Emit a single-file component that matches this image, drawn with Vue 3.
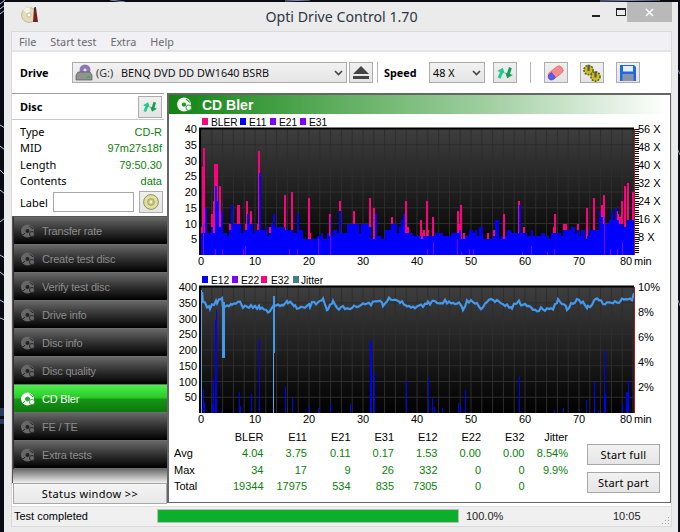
<script setup>
const menus = ['File', 'Start test', 'Extra', 'Help']

const discRows = [
  { k: 'Type', v: 'CD-R' },
  { k: 'MID', v: '97m27s18f' },
  { k: 'Length', v: '79:50.30' },
  { k: 'Contents', v: 'data' },
]

const navItems = ['Transfer rate', 'Create test disc', 'Verify test disc', 'Drive info', 'Disc info', 'Disc quality', 'CD Bler', 'FE / TE', 'Extra tests']

const stats = [
  { label: '', head: true, cells: ['BLER', 'E11', 'E21', 'E31', 'E12', 'E22', 'E32', 'Jitter'] },
  { label: 'Avg', cells: ['4.04', '3.75', '0.11', '0.17', '1.53', '0.00', '0.00', '8.54%'] },
  { label: 'Max', cells: ['34', '17', '9', '26', '332', '0', '0', '9.9%'] },
  { label: 'Total', cells: ['19344', '17975', '534', '835', '7305', '0', '0', ''] },
]

// plot geometry, in page pixels
const X0 = 201
const X1 = 634
const TOP1 = 129
const BASE1 = 255
const TOP2 = 287
const BASE2 = 413
const UNIT1 = 3.15

const minuteTicks = [0, 10, 20, 30, 40, 50, 60, 70, 80]
const vGrid = Array.from({ length: 41 }, (_, i) => X0 + i * 10.8)
const hGrid1 = [5, 10, 15, 20, 25, 30, 35].map(v => BASE1 - v * UNIT1)
const hGrid2 = [50, 100, 150, 200, 250, 300, 350].map(v => BASE2 - v * 0.315)
const leftLabels1 = [40, 35, 30, 25, 20, 15, 10, 5]
const leftLabels2 = [400, 350, 300, 250, 200, 150, 100, 50]
const speedLabels = ['56 X', '48 X', '40 X', '32 X', '24 X', '16 X', '8 X']
const jitterLabels = ['10%', '8%', '6%', '4%', '2%']
const speedTicks = Array.from({ length: 56 }, (_, i) => TOP1 + i * 2.25)

let seed = 1640
function rnd() {
  seed = (seed * 16807) % 2147483647
  return (seed % 1000) / 1000
}

const pinkPeaks = [[203, 28], [204, 34], [212, 13], [214, 17], [215, 29], [216, 29], [217, 29], [220, 22], [238, 16], [239, 16], [247, 17], [251, 14], [259, 33], [285, 19], [292, 20], [309, 18], [330, 13], [340, 17], [354, 14], [370, 18], [374, 15], [406, 17], [421, 11], [427, 17], [433, 12], [458, 14], [461, 16], [504, 13], [519, 17], [555, 13], [587, 15], [594, 18], [602, 16], [604, 19], [617, 14], [622, 17], [625, 22], [628, 23], [633, 20]]
const bluePeaks = { 205: 15, 215: 22, 217: 17, 221: 14, 231: 16, 247: 13, 259: 26, 273: 13, 297: 13, 340: 14, 376: 13, 404: 13, 519: 16, 600: 14, 611: 14, 615: 15 }
const purpleBars = [[203, 10], [215, 2], [222, 2], [243, 2], [245, 3], [289, 2], [297, 2], [318, 5], [330, 12], [427, 2], [433, 4], [457, 5], [461, 1], [469, 2], [473, 2], [522, 1], [531, 3], [547, 1], [554, 2], [604, 12], [610, 2], [617, 2], [622, 4]]

const bars1 = []
for (const [x, v] of pinkPeaks) {
  bars1.push({ x: x - 1, y: BASE1 - v * UNIT1, w: 2, h: v * UNIT1, c: '#ff0080' })
}
let held = 7
for (let x = X0; x < X1; x += 2) {
  // the error count holds for a few samples, then steps to a new level
  if (rnd() < 0.55) {
    if (x < 300) held = 6 + Math.round(rnd() * 4)
    else if (x < 590) held = 5 + Math.round(rnd() * 3) + (rnd() < 0.2 ? 3 : 0)
    else held = 9 + Math.round(rnd() * 5)
  }
  let v = held
  if (bluePeaks[x] || bluePeaks[x + 1]) v = bluePeaks[x] || bluePeaks[x + 1]
  if (rnd() < 0.14) bars1.push({ x, y: BASE1 - (v + 2) * UNIT1, w: 2, h: 2 * UNIT1, c: '#ff0080' })
  bars1.push({ x, y: BASE1 - v * UNIT1, w: 2, h: v * UNIT1, c: '#0000ff' })
}
for (const [x, v] of purpleBars) {
  bars1.push({ x, y: BASE1 - v * UNIT1, w: 1, h: v * UNIT1, c: '#8000ff' })
}

const e12Bars = [[203, 24], [204, 11], [212, 9], [213, 33], [215, 93], [216, 103], [221, 2], [239, 21], [240, 7], [251, 19], [259, 74], [285, 26], [292, 15], [309, 8], [318, 5], [330, 9], [338, 1], [350, 9], [370, 72], [371, 72], [374, 41], [406, 32], [420, 1], [428, 35], [432, 15], [434, 6], [442, 5], [458, 10], [460, 7], [465, 23], [519, 37], [554, 3], [563, 5], [586, 13], [594, 31], [598, 3], [604, 62], [605, 19], [622, 10], [626, 21], [627, 21], [628, 33]]

const jitterKeys = [[202, 290], [203, 302], [210, 308], [217, 302], [222, 300], [223, 308], [232, 305], [238, 300], [243, 307], [260, 307], [268, 312], [274, 303], [283, 307], [288, 302], [295, 307], [310, 305], [323, 300], [328, 310], [333, 300], [337, 307], [348, 309], [357, 306], [373, 303], [378, 300], [383, 305], [389, 297], [400, 302], [407, 307], [415, 308], [428, 303], [433, 302], [445, 302], [460, 302], [463, 311], [467, 300], [483, 308], [487, 300], [503, 303], [512, 308], [517, 302], [537, 310], [553, 308], [558, 300], [567, 308], [577, 300], [588, 307], [595, 300], [607, 303], [620, 301], [632, 300], [634, 293]]
const jitterPts = []
for (let i = 0; i < jitterKeys.length - 1; i++) {
  const [ax, ay] = jitterKeys[i]
  const [bx, by] = jitterKeys[i + 1]
  for (let x = ax; x < bx; x += 2) {
    const y = ay + ((by - ay) * (x - ax)) / (bx - ax) + (rnd() - 0.5) * 4.5
    jitterPts.push(`${x},${y.toFixed(1)}`)
  }
}
jitterPts.push('634,293')
const jitterLine = jitterPts.join(' ')
</script>

<template>
  <div class="desktop">
    <svg class="wallpaper" width="680" height="532" viewBox="0 0 680 532">
      <path d="M0 4 L5 0 M0 9 L5 5 M0 14 L5 10 M0 125 L5 128 M0 146 L5 150 M0 170 L5 175 M0 190 L5 194 M0 222 L5 218 M0 255 L5 258 M0 272 L5 276 M0 300 L5 303 M0 318 L5 320" stroke="#b9c8ee" stroke-width="1" />
      <rect x="0" y="408" width="4" height="8" fill="#2b3a5c" />
      <rect x="0" y="419" width="4" height="5" fill="#2b3a5c" />
      <path d="M110 0 L125 2 M285 1 L310 0 M600 1 L660 0 M678 70 L680 74 M678 150 L680 155 M678 300 L680 306" stroke="#7f8fb5" stroke-width="1" />
    </svg>

    <div class="window">
      <div class="titlebar">
        <svg class="app-icon" width="18" height="18" viewBox="0 0 18 18">
          <circle cx="8" cy="9" r="7.5" fill="#e4dcb8" stroke="#a8a080" stroke-width=".6" />
          <path d="M8 9 L2 4 A7.5 7.5 0 0 1 9 1.5 Z" fill="#f6f3e2" />
          <circle cx="8" cy="9" r="2" fill="#fff" stroke="#999" stroke-width=".6" />
          <path d="M13 2 L15 2 L17 16 L12 16 Z" fill="#7a2020" />
          <rect x="13.4" y="1" width="1.5" height="4" fill="#333" />
        </svg>
        <span class="win-title">Opti Drive Control 1.70</span>
        <div class="controls">
          <span class="min-btn"></span>
          <span class="max-btn"></span>
          <span class="close-btn">
            <svg width="9" height="9" viewBox="0 0 9 9"><path d="M1 1 L8 8 M8 1 L1 8" stroke="#fff" stroke-width="1.5" /></svg>
          </span>
        </div>
      </div>

      <div class="client">
        <div class="menubar">
          <span v-for="m in menus" :key="m">{{ m }}</span>
        </div>

        <div class="toolbar">
          <b class="tool-label drive-label">Drive</b>
          <div class="select drive-select">
            <svg width="18" height="17" viewBox="0 0 18 17">
              <circle cx="10" cy="6" r="5.5" fill="#8c78b8" />
              <circle cx="10" cy="6" r="1.6" fill="#e4e0f0" />
              <path d="M1 11 L3 8 H15 L17 11 V16 H1 Z" fill="#8f9490" stroke="#555" stroke-width=".7" />
              <rect x="12" y="12.5" width="3" height="1.5" fill="#22bb44" />
            </svg>
            <span class="drive-letter">(G:)</span>
            <span class="drive-name">BENQ DVD DD DW1640 BSRB</span>
            <svg class="chev" width="9" height="6" viewBox="0 0 9 6"><path d="M1 1 L4.5 4.5 L8 1" fill="none" stroke="#444" stroke-width="1.6" /></svg>
          </div>
          <button class="tbtn eject">
            <svg width="16" height="14" viewBox="0 0 16 14"><path d="M8 0 L16 8 H0 Z" fill="#444" /><rect x="0" y="10" width="16" height="3" fill="#444" /></svg>
          </button>
          <i class="tsep sep-a"></i>
          <b class="tool-label speed-label">Speed</b>
          <div class="select speed-select">
            <span>48 X</span>
            <svg class="chev" width="9" height="6" viewBox="0 0 9 6"><path d="M1 1 L4.5 4.5 L8 1" fill="none" stroke="#444" stroke-width="1.6" /></svg>
          </div>
          <button class="tbtn refresh">
            <svg width="18" height="18" viewBox="0 0 18 18">
              <g transform="rotate(22 9 9)">
                <path d="M1 10 L5 5 L9 9.500 L7 9.500 L7 16 L4 16 L4 10 Z" fill="#22c98e" />
                <path d="M17 8 L13 13 L9 8.500 L11 8.500 L10.500 2 L13.500 2 L14 8 Z" fill="#1a9c50" />
              </g>
            </svg>
          </button>
          <i class="tsep sep-b"></i>
          <button class="tbtn eraser">
            <svg width="18" height="18" viewBox="0 0 18 18">
              <rect x="1" y="4.5" width="16" height="8" rx="3.5" transform="rotate(-38 9 9)" fill="#f78a8a" stroke="#d86060" stroke-width=".6" />
              <path d="M4.5 8.500 L8.500 13.500 L6 15.600 A3.300 3.300 0 0 1 1.600 11 Z" fill="#5a5af0" stroke="#3a3ac0" stroke-width=".6" />
            </svg>
          </button>
          <button class="tbtn gears">
            <svg width="20" height="18" viewBox="0 0 20 18">
              <circle cx="6.5" cy="6" r="4.6" fill="#c8c020" stroke="#6a6610" stroke-width="1.6" stroke-dasharray="2 1" />
              <circle cx="13.5" cy="12.5" r="4.6" fill="#c8c020" stroke="#6a6610" stroke-width="1.6" stroke-dasharray="2 1" />
              <rect x="5.5" y="1" width="2.2" height="6" fill="#555" />
              <rect x="12.4" y="7.5" width="2.2" height="6" fill="#555" />
            </svg>
          </button>
          <button class="tbtn floppy">
            <svg width="18" height="18" viewBox="0 0 18 18">
              <path d="M1 1 H15 L17 3 V17 H1 Z" fill="#1a6ae8" />
              <rect x="4" y="2" width="10" height="5.5" fill="#e8eef8" />
              <rect x="3.5" y="10" width="11" height="7" fill="#8a94a8" />
            </svg>
          </button>
        </div>

        <div class="main">
          <div class="left">
            <div class="disc-panel">
              <div class="disc-head">
                <b>Disc</b>
                <button class="tbtn small">
                  <svg width="16" height="16" viewBox="0 0 18 18">
                    <g transform="rotate(22 9 9)">
                      <path d="M1 10 L5 5 L9 9.500 L7 9.500 L7 16 L4 16 L4 10 Z" fill="#22c98e" />
                      <path d="M17 8 L13 13 L9 8.500 L11 8.500 L10.500 2 L13.500 2 L14 8 Z" fill="#1a9c50" />
                    </g>
                  </svg>
                </button>
              </div>
              <div class="disc-rows">
                <div v-for="r in discRows" :key="r.k" class="disc-row">
                  <span>{{ r.k }}</span>
                  <span class="green">{{ r.v }}</span>
                </div>
              </div>
              <div class="label-row">
                <span class="label-text">Label</span>
                <div class="label-input"></div>
                <button class="tbtn small">
                  <svg width="16" height="16" viewBox="0 0 16 16">
                    <circle cx="8" cy="8" r="7.4" fill="#e2e09a" stroke="#77775a" stroke-width=".8" />
                    <circle cx="8" cy="8" r="3.4" fill="#c8c67c" stroke="#8a8a60" stroke-width=".6" />
                    <circle cx="8" cy="8" r="1.4" fill="#f4f4dc" />
                  </svg>
                </button>
              </div>
            </div>

            <div class="nav">
              <div v-for="n in navItems" :key="n" :class="['nav-item', { active: n === 'CD Bler' }]">
                <svg class="nav-icon" width="16" height="16" viewBox="0 0 16 16">
                  <circle cx="7.5" cy="8" r="6.5" fill="currentColor" />
                  <circle cx="7.5" cy="8" r="2" class="hole" />
                  <circle cx="12" cy="11" r="2.6" fill="currentColor" class="cog" />
                  <path d="M9.500 3 L13 6 M3 12 L5 10" class="cut" />
                </svg>
                <span>{{ n }}</span>
              </div>
            </div>
            <div class="nav-fill"></div>
            <button class="status-btn">Status window &gt;&gt;</button>
          </div>

          <div class="panel">
            <div class="panel-head">
              <svg width="17" height="17" viewBox="0 0 16 16">
                <circle cx="7.5" cy="8" r="6.5" fill="#eef7ee" />
                <circle cx="7.5" cy="8" r="2" fill="#2c8c30" />
                <circle cx="12" cy="11" r="2.6" fill="#eef7ee" stroke="#2c8c30" stroke-width=".8" />
                <path d="M9.500 3 L13 6" stroke="#2c8c30" stroke-width="1" />
              </svg>
              <b>CD Bler</b>
            </div>

            <svg class="chart chart-top" width="502" height="158" viewBox="169 114 502 158">
              <g class="legend">
                <rect x="202" y="118" width="6" height="7" fill="#ff0080" /><text x="211" y="126">BLER</text>
                <rect x="240" y="118" width="6" height="7" fill="#0000ff" /><text x="249" y="126">E11</text>
                <rect x="270" y="118" width="6" height="7" fill="#8000ff" /><text x="279" y="126">E21</text>
                <rect x="300" y="118" width="6" height="7" fill="#8000ff" /><text x="309" y="126">E31</text>
              </g>
              <rect :x="X0" :y="TOP1" :width="X1 - X0" :height="BASE1 - TOP1" fill="url(#plotBg)" />
              <g class="grid">
                <line v-for="x in vGrid" :key="x" :x1="x" :x2="x" :y1="TOP1" :y2="BASE1" />
                <line v-for="y in hGrid1" :key="y" :x1="X0" :x2="X1" :y1="y" :y2="y" />
              </g>
              <g shape-rendering="crispEdges">
                <rect v-for="(b, i) in bars1" :key="i" :x="b.x" :y="b.y" :width="b.w" :height="b.h" :fill="b.c" />
              </g>
              <path d="M200 255 V128.500 H634" fill="none" stroke="#000" stroke-width="2" />
              <line x1="634.500" x2="634.500" :y1="TOP1" :y2="BASE1" stroke="#c01010" />
              <g stroke="#000" shape-rendering="crispEdges">
                <line v-for="y in speedTicks" :key="y" x1="635" x2="639" :y1="y" :y2="y" />
              </g>
              <g class="axis" text-anchor="end">
                <text v-for="(v, i) in leftLabels1" :key="v" x="197" :y="TOP1 + i * 15.75 + 4">{{ v }}</text>
              </g>
              <g class="axis">
                <text v-for="(v, i) in speedLabels" :key="v" x="638" :y="TOP1 + i * 18 + 4">{{ v }}</text>
                <template v-for="m in minuteTicks" :key="m">
                  <text :x="m === 80 ? 626 : X0 + m * 5.4" y="265" text-anchor="middle">{{ m }}</text>
                </template>
                <text x="634" y="265">min</text>
              </g>
            </svg>

            <svg class="chart" width="502" height="156" viewBox="169 272 502 156">
              <g class="legend">
                <rect x="202" y="276" width="6" height="7" fill="#0000ff" /><text x="211" y="284">E12</text>
                <rect x="232" y="276" width="6" height="7" fill="#8000ff" /><text x="241" y="284">E22</text>
                <rect x="261" y="276" width="6" height="7" fill="#ff0080" /><text x="271" y="284">E32</text>
                <rect x="293" y="276" width="6" height="7" fill="#408080" /><text x="301" y="284">Jitter</text>
              </g>
              <rect :x="X0" :y="TOP2" :width="X1 - X0" :height="BASE2 - TOP2" fill="url(#plotBg)" />
              <g class="grid">
                <line v-for="x in vGrid" :key="x" :x1="x" :x2="x" :y1="TOP2" :y2="BASE2" />
                <line v-for="y in hGrid2" :key="y" :x1="X0" :x2="X1" :y1="y" :y2="y" />
              </g>
              <g shape-rendering="crispEdges">
                <rect v-for="b in e12Bars" :key="b[0]" :x="b[0]" :y="BASE2 - b[1]" width="1" :height="b[1]" fill="#0000ff" />
                <rect x="201" y="290" width="1" height="123" fill="#5aa7e8" />
                <rect x="222" y="302" width="3" height="56" fill="#4499ee" />
                <rect x="273" y="296" width="2" height="57" fill="#4499ee" />
                <rect x="273" y="353" width="1" height="60" fill="#5aa7e8" />
              </g>
              <polyline :points="jitterLine" fill="none" stroke="#4499ee" stroke-width="2.2" />
              <path d="M200 413 V286.500 H634" fill="none" stroke="#000" stroke-width="2" />
              <line x1="634.500" x2="634.500" :y1="TOP2" :y2="BASE2" stroke="#c01010" />
              <g class="axis" text-anchor="end">
                <text v-for="(v, i) in leftLabels2" :key="v" x="197" :y="TOP2 + i * 15.75 + 4">{{ v }}</text>
              </g>
              <g class="axis">
                <text v-for="(v, i) in jitterLabels" :key="v" x="638" :y="TOP2 + i * 25 + 4">{{ v }}</text>
                <template v-for="m in minuteTicks" :key="m">
                  <text :x="m === 80 ? 626 : X0 + m * 5.4" y="423" text-anchor="middle">{{ m }}</text>
                </template>
                <text x="634" y="423">min</text>
              </g>
              <defs>
                <linearGradient id="plotBg" x1="0" y1="0" x2="0" y2="1">
                  <stop offset="0" stop-color="#3e3e3e" />
                  <stop offset="1" stop-color="#000" />
                </linearGradient>
              </defs>
            </svg>

            <div class="bottom">
              <div class="stats">
                <div v-for="row in stats" :key="row.label" class="stat-row">
                  <span class="stat-label">{{ row.label }}</span>
                  <span v-for="(c, i) in row.cells" :key="i" :class="['stat-cell', { green: !row.head }]">{{ c }}</span>
                </div>
              </div>
              <div class="start-btns">
                <button class="start-btn">Start full</button>
                <button class="start-btn">Start part</button>
              </div>
            </div>
          </div>
        </div>

        <div class="statusbar">
          <span class="st-text">Test completed</span>
          <div class="progress"><div class="progress-fill"></div></div>
          <span class="st-pct">100.0%</span>
          <span class="st-time">10:05</span>
          <svg class="grip" width="10" height="10" viewBox="0 0 10 10">
            <path d="M8 2 h1 v1 h-1z M5 5 h1 v1 h-1z M8 5 h1 v1 h-1z M2 8 h1 v1 h-1z M5 8 h1 v1 h-1z M8 8 h1 v1 h-1z" fill="#a0a0a0" />
          </svg>
        </div>
      </div>
    </div>
  </div>
</template>

<style scoped>
.desktop {
  position: relative;
  width: 680px;
  height: 532px;
  overflow: hidden;
  background: #0a0b12;
  font-family: "Noto Sans", "Liberation Sans", sans-serif;
  font-size: 11px;
  color: #000;
}
.wallpaper {
  position: absolute;
  left: 0;
  top: 0;
}
.window {
  position: absolute;
  left: 4px;
  top: 2px;
  width: 674px;
  height: 530px;
  background: #ebebeb;
  box-sizing: border-box;
  padding: 0 7px 0 8px;
  display: flex;
  flex-direction: column;
}
.titlebar {
  position: relative;
  height: 30px;
  flex: none;
  display: flex;
  align-items: center;
  justify-content: center;
}
.app-icon {
  position: absolute;
  left: 9px;
  top: 4px;
}
.win-title {
  font-size: 14.2px;
  color: #2a3644;
  margin-top: -2px;
}
.controls {
  position: absolute;
  right: -7px;
  top: 0;
  display: flex;
}
.min-btn {
  position: absolute;
  right: 78px;
  top: 13px;
  width: 8px;
  height: 2px;
  background: #222;
}
.max-btn {
  position: absolute;
  right: 52px;
  top: 6px;
  width: 8px;
  height: 5px;
  border: 1px solid #222;
  border-top-width: 2px;
}
.close-btn {
  width: 45px;
  height: 20px;
  margin-right: 6px;
  background: #b9b9b9;
  display: flex;
  align-items: center;
  justify-content: center;
}
.client {
  flex: none;
  width: 659px;
  height: 494px;
  background: #fff;
  display: flex;
  flex-direction: column;
  box-shadow: 0 0 0 1px #dadada;
}
.menubar {
  height: 18px;
  padding-left: 7px;
  background: #f0f0f5;
  border-bottom: 2px solid #e4e4e4;
  display: flex;
  align-items: center;
  gap: 14px;
  color: #6a6a6a;
  flex: none;
  font-size: 10.8px;
}
.toolbar {
  height: 41px;
  flex: none;
  display: flex;
  align-items: center;
  padding-left: 8px;
}
.tool-label {
  font-weight: 700;
  font-size: 10.8px;
}
.drive-label {
  width: 52px;
}
.select {
  box-sizing: border-box;
  height: 21px;
  border: 1px solid #acacac;
  background: linear-gradient(#f2f2f2, #e5e5e5);
  display: flex;
  align-items: center;
  font-size: 10.8px;
  position: relative;
}
.drive-select {
  width: 275px;
  padding-left: 2px;
}
.drive-letter {
  margin-left: 3px;
  width: 25px;
  color: #333;
}
.drive-name {
  color: #111;
}
.chev {
  position: absolute;
  right: 3px;
  top: 7px;
}
.tbtn {
  box-sizing: border-box;
  width: 24px;
  height: 21px;
  padding: 0;
  border: 1px solid #adadad;
  background: linear-gradient(#f0f0f0, #e4e4e4);
  display: flex;
  align-items: center;
  justify-content: center;
  flex: none;
}
.eject {
  margin-left: 2px;
}
.tsep {
  width: 1px;
  height: 21px;
  background: #b5b5b5;
}
.sep-a {
  margin: 0 6px 0 4px;
}
.speed-label {
  width: 45px;
}
.speed-select {
  width: 56px;
  padding-left: 3px;
}
.refresh {
  margin-left: 8px;
}
.sep-b {
  margin: 0 13px 0 13px;
}
.gears,
.floppy {
  margin-left: 12px;
}
.main {
  height: 413px;
  flex: none;
  display: flex;
}
.left {
  width: 155px;
  flex: none;
  display: flex;
  flex-direction: column;
}
.disc-panel {
  width: 152px;
  height: 123px;
  box-sizing: border-box;
  border-top: 1px solid #a0a0a0;
  flex: none;
}
.disc-head {
  height: 25px;
  border-bottom: 1px solid #c8c8c8;
  display: flex;
  align-items: center;
  justify-content: space-between;
  padding: 0 2px 0 8px;
  font-size: 11px;
}
.small {
  width: 24px;
  height: 22px;
}
.disc-rows {
  padding: 4px 2px 0 8px;
}
.disc-row {
  height: 16.3px;
  line-height: 16.3px;
  display: flex;
  justify-content: space-between;
  font-size: 11px;
}
.disc-row .green {
  font-family: "Liberation Sans", sans-serif;
}
.green {
  color: #0a820a;
}
.label-row {
  margin-top: 2px;
  padding-left: 8px;
  display: flex;
  align-items: center;
  font-size: 11px;
}
.label-text {
  width: 33px;
  flex: none;
}
.label-input {
  box-sizing: border-box;
  width: 81px;
  height: 20px;
  margin-right: 5px;
  border: 1px solid #a8a8a8;
}
.nav {
  flex: none;
  box-sizing: border-box;
  padding-left: 1px;
  border-top: 1px solid #555;
  border-left: 1px solid #555;
  background: #333;
}
.nav-item {
  box-sizing: border-box;
  height: 28px;
  padding-left: 6px;
  border-bottom: 1px solid #6e6e6e;
  background: linear-gradient(#686868, #363636 45%, #000);
  color: #8c8c8c;
  display: flex;
  align-items: center;
  gap: 6px;
  font-family: "Liberation Sans", sans-serif;
  font-size: 11px;
  letter-spacing: -0.2px;
}
.nav-item.active {
  background: linear-gradient(#4cf04c, #28c828 48%, #159515 52%, #0d780d);
  color: #fff;
}
.nav-icon {
  color: #666;
  flex: none;
}
.nav-icon .hole {
  fill: #222;
}
.nav-icon .cog {
  stroke: #222;
  stroke-width: 0.8;
}
.nav-icon .cut {
  stroke: #222;
  stroke-width: 1;
}
.nav-item.active .nav-icon {
  color: #fff;
}
.nav-item.active .nav-icon .hole,
.nav-item.active .nav-icon .cut {
  fill: #22aa22;
  stroke: #22aa22;
}
.nav-item.active .nav-icon .cog {
  stroke: #22aa22;
}
.nav-fill {
  height: 14px;
  flex: none;
  background: linear-gradient(#6a6a6a, #f0f0f0);
  border-left: 1px solid #555;
}
.status-btn {
  box-sizing: border-box;
  width: 154px;
  height: 21px;
  margin-left: 1px;
  padding: 0;
  border: 1px solid #a8a8a8;
  background: linear-gradient(#f4f4f4, #e8e8e8);
  font-family: "Noto Sans", sans-serif;
  font-size: 11px;
  letter-spacing: .35px;
  color: #000;
}
.panel {
  box-sizing: border-box;
  width: 504px;
  height: 410px;
  border: 1px solid #666;
  border-left-width: 2px;
  border-top-width: 2px;
  display: flex;
  flex-direction: column;
}
.panel-head {
  height: 19px;
  flex: none;
  box-sizing: border-box;
  padding-left: 7px;
  display: flex;
  align-items: center;
  gap: 9px;
  margin-right: 3px;
  background: linear-gradient(90deg, #128412, #5fae5f 34%, #a3d0a3 65%, #ffffff);
  color: #fff;
  font-family: "Liberation Sans", sans-serif;
  font-size: 14px;
}
.chart {
  display: block;
  flex: none;
}
.legend text {
  font-family: "Liberation Sans", sans-serif;
  font-size: 10.2px;
  fill: #000;
}
.axis text {
  font-family: "Liberation Sans", sans-serif;
  font-size: 11px;
  fill: #000;
}
.grid line {
  stroke: #2e2e2e;
  stroke-width: 1;
}
.bottom {
  display: flex;
  flex: 1;
}
.stats {
  padding: 1px 0 0 5px;
  width: 418px;
  flex: none;
  box-sizing: border-box;
}
.stat-row {
  display: grid;
  grid-template-columns: 46px repeat(8, 43.500px);
  height: 16.300px;
  line-height: 16.300px;
  font-family: "Liberation Sans", sans-serif;
  font-size: 11px;
}
.stat-cell {
  text-align: right;
}
.start-btns {
  display: flex;
  flex-direction: column;
  gap: 7px;
  padding-top: 16px;
}
.start-btn {
  box-sizing: border-box;
  width: 73px;
  height: 21px;
  padding: 0;
  border: 1px solid #a8a8a8;
  background: linear-gradient(#f2f2f2, #e5e5e5);
  font-family: "Noto Sans", sans-serif;
  font-size: 11px;
  letter-spacing: .2px;
  color: #000;
}
.statusbar {
  flex: 1;
  display: flex;
  align-items: center;
  position: relative;
  background: #f0f0f0;
  font-family: "Liberation Sans", sans-serif;
  font-size: 11px;
  border-top: 1px solid #e0e0e0;
  padding-bottom: 1px;
}
.st-text {
  width: 143px;
  padding-left: 2px;
  flex: none;
}
.progress {
  width: 302px;
  height: 14px;
  box-sizing: border-box;
  border: 1px solid #bcbcbc;
  flex: none;
}
.progress-fill {
  height: 100%;
  width: 100%;
  background: #0ab02c;
}
.st-pct {
  margin-left: 7px;
  width: 95px;
  color: #222;
}
.st-time {
  color: #222;
  margin-left: 52px;
}
.grip {
  position: absolute;
  right: 1px;
  bottom: 1px;
}
</style>

<style>
html, body {
  margin: 0;
  background: #0a0b12;
}
</style>
